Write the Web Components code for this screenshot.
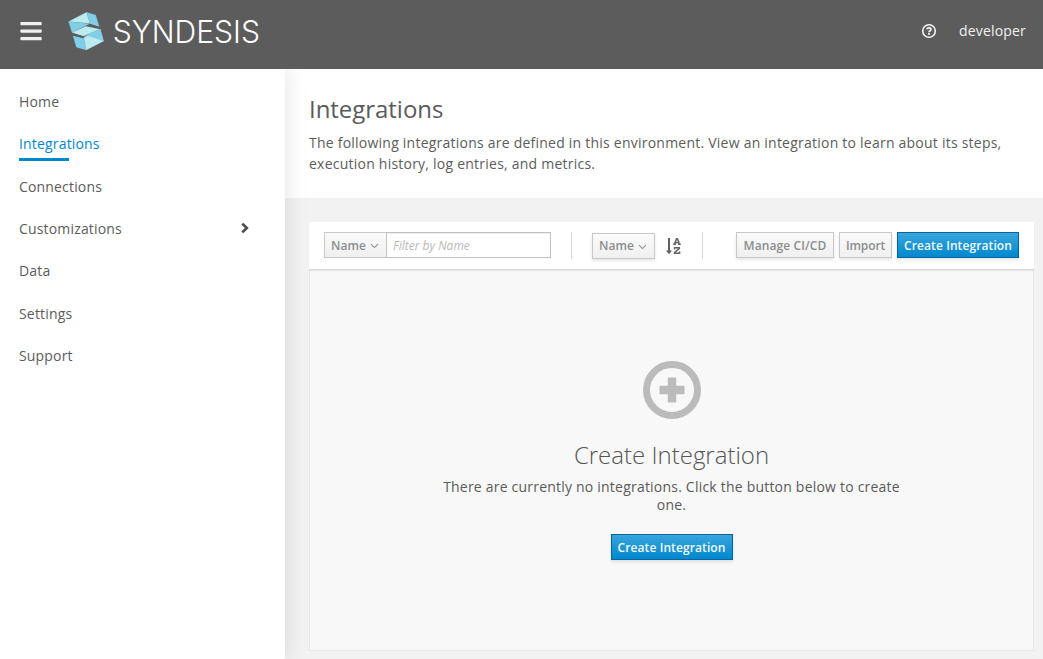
<!DOCTYPE html>
<html lang="en">
<head>
<meta charset="utf-8">
<title>Syndesis</title>
<style>
html,body{margin:0;height:100%;overflow:hidden}
body{font-family:"Open Sans",sans-serif;font-size:14px;color:#4d5258;background:#f2f2f2}
</style>
</head>
<body>
<syn-app></syn-app>
<script>
const define = (name, markup) => customElements.define(name, class extends HTMLElement {
  constructor() {
    super();
    const t = document.createElement('template');
    t.innerHTML = '<style>*{box-sizing:border-box}</style>' + markup;
    this.attachShadow({ mode: 'open' }).append(t.content.cloneNode(true));
  }
});

define('syn-logo', `
<style>:host{display:block;width:210px;height:62px}svg{display:block;overflow:visible}</style>
<svg width="210" height="62" viewBox="67 0 210 62" role="img">
  <g stroke="#8fb9c8" stroke-width=".2" stroke-linejoin="round">
    <path fill="#bcebf0" d="M68.5 21.6 86.5 12.2 90 23.6Z"/>
    <path fill="#7fcfe8" d="M86.5 12.2 95.7 14.9 99.3 26.8 90 23.8Z"/>
    <path fill="#7fcfe8" d="M68.5 21.6 89.6 23.8 72 32.4Z"/>
    <path fill="#bcebf0" d="M72 32.6 85.8 26.2 100.3 29.2 83.2 36.2Z"/>
    <path fill="#7fcfe8" d="M100.3 29.2 103.6 41 84.5 36Z"/>
    <path fill="#bcebf0" d="M83.6 36.8 103.6 41 86 50Z"/>
    <path fill="#bcebf0" d="M83.8 37.6 92 34 103.6 41 86 50Z"/>
    <path fill="#7fcfe8" d="M100.3 29.2 103.6 41 86.2 35Z"/>
    <path fill="#7fcfe8" d="M73 35.8 83.8 38.2 86 50 76.3 47.3Z"/>
  </g>
  <path d="M72.5 33.2 83.4 36.2 84.5 38.2 73 35.6ZM87.3 25.8 90.5 24.2 99.2 27.1 100 28.9Z" fill="#5c5c5c"/>
  <text x="112.7" y="42.6" textLength="147.3" lengthAdjust="spacingAndGlyphs" font-family="Inter,sans-serif" font-weight="300" font-size="31.5" fill="#fff">SYNDESIS</text>
</svg>`);

define('syn-header', `
<style>
:host{display:flex;align-items:flex-start;height:69px;background:#5c5c5c;color:#f1f1f1}
.menu{margin:21px 0 0 20px}
syn-logo{margin-left:25px}
.right{margin-left:auto;display:flex;align-items:center;height:60px;padding-right:17px;gap:23px;letter-spacing:.17px}
svg{display:block}
.help{margin-top:2px}
</style>
<svg class="menu" width="22" height="20" viewBox="0 0 22 20" fill="#f1f1f1"><rect x=".4" y=".9" width="21.3" height="3.3" rx=".9"/><rect x=".4" y="8.4" width="21.3" height="3.3" rx=".9"/><rect x=".4" y="15.9" width="21.3" height="3.3" rx=".9"/></svg>
<syn-logo></syn-logo>
<div class="right">
<svg class="help" width="14" height="14" viewBox="0 0 14 14" fill="none" stroke="#f5f5f5" overflow="visible"><circle cx="7" cy="7" r="6.3" stroke-width="1.6"/><path d="M4.8 5.3C5.1 4.2 5.9 3.9 7 3.9c1.2 0 2 .6 2 1.5C9 6.8 7 6.6 7 8.2" stroke-width="1.7"/><path d="M7 9v1.7" stroke-width="1.9"/></svg>
<slot></slot></div>`);

define('syn-nav-item', `
<style>
:host{display:flex;align-items:center;justify-content:space-between;height:42.35px;padding:0 36px 0 19px;line-height:22px;letter-spacing:.17px;color:#5c5c5c}
span{position:relative}
:host([active]){color:#0088ce}
:host([active]) span::after{content:"";position:absolute;left:0;bottom:-6px;width:50px;height:3px;background:#0088ce}
svg{display:none}
:host([expandable]) svg{display:block;margin-top:-2px}
</style>
<span><slot></slot></span>
<svg width="8" height="12" viewBox="0 0 8 12"><path d="M1.3 1.6 5.8 6 1.3 10.4" fill="none" stroke="#4d4d4d" stroke-width="2.7"/></svg>`);

define('syn-nav', `
<style>:host{display:block;padding-top:11.7px;background:#fff;box-shadow:0 0 22px 0 rgba(3,3,3,.12)}</style>
<slot></slot>`);

define('syn-button', `
<style>
:host{display:inline-flex;align-items:center;justify-content:center;height:26px;padding:1px 6px 0;border:1px solid #c8c8c8;background:linear-gradient(#fafafa,#f0f0f0);box-shadow:0 2px 3px rgba(3,3,3,.1);font-size:12px;font-weight:600;line-height:20px;letter-spacing:.1px;color:#8b8d8f;white-space:nowrap;box-sizing:border-box}
:host([primary]){color:#f5fafd;border-color:#00659c;background:linear-gradient(#39a5dc,#0088ce)}
svg{display:none}
:host([dropdown]) svg{display:block;margin:1px 1px 0 4px}
:host([flat]){box-shadow:none;border-right:0}
</style>
<slot></slot><svg width="9" height="6" viewBox="0 0 9 6"><path d="M1 1.1 4.5 4.6 8 1.1" fill="none" stroke="#8b8d8f" stroke-width="1.1"/></svg>`);

define('syn-toolbar', `
<style>
:host{display:flex;align-items:flex-start;height:48px;padding:10px 15px 0;background:#fff;border-bottom:1px solid #d8d8d8;box-shadow:0 1px 1px rgba(3,3,3,.06);position:relative}
.filter{display:flex}
.filter syn-button{width:62px}
input{width:165px;height:26px;border:1px solid #c2c2c2;border-radius:0;padding:0 6px;font:italic 12px "Open Sans",sans-serif;background:#fff;box-shadow:inset 0 1px 1px rgba(3,3,3,.075);outline:0}
input::placeholder{color:#b8b8b8;opacity:1}
.rule{width:1px;height:27px;background:#d8d8d8}
.r1{margin:0 20px}.r2{margin-left:21px}
.sort{width:63px;margin-top:1px;padding-top:0}
.az{margin:6px 0 0 11px;display:block}
.actions{display:flex;gap:5px;margin-left:auto}
.actions .m{width:98px}.actions .i{width:53px;letter-spacing:-.1px}.actions .c{width:122px}
</style>
<div class="filter"><syn-button dropdown flat>Name</syn-button><input placeholder="Filter by Name"></div>
<div class="rule r1"></div>
<syn-button class="sort" dropdown>Name</syn-button>
<svg class="az" width="15" height="17" viewBox="0 0 15 17"><path d="M3 0v14" stroke="#606060" stroke-width="2"/><path d="M0 12.6h6L3 16.2Z" fill="#606060"/><g fill="none" stroke="#666" stroke-width="1.5"><path d="M8.4 6.2 10.5.7h.9l2.1 5.5M9.2 4.4h3.5M7.2 6.3h2.8M12 6.3h2.8"/><path d="M8.5 11.6V9.8h4.8v.6l-4.8 4.3v.6h5.1v-1.9"/></g></svg>
<div class="rule r2"></div>
<div class="actions"><syn-button class="m">Manage CI/CD</syn-button><syn-button class="i">Import</syn-button><syn-button class="c" primary>Create Integration</syn-button></div>`);

define('syn-empty-state', `
<style>
:host{display:flex;flex-direction:column;align-items:center;height:381px;padding-top:91px;background:#f8f8f8;border:1px solid #e7e7e7;border-top:0;text-align:center;color:#5a5a5a;box-sizing:border-box}
svg{display:block}
h2{margin:20px 0 0;font-size:24px;font-weight:300;line-height:32px;color:#555}
p{margin:7px 0 20px;width:470px;line-height:18px;letter-spacing:.21px}
syn-button{width:122px}
</style>
<svg width="58" height="58" viewBox="0 0 58 58"><circle cx="29" cy="29" r="25.5" fill="none" stroke="#bbb" stroke-width="7"/><path d="M25.8 16.5h6.4q1 0 1 1v7.3h7.3q1 0 1 1v6.4q0 1-1 1h-7.3v7.3q0 1-1 1h-6.4q-1 0-1-1v-7.3h-7.3q-1 0-1-1v-6.4q0-1 1-1h7.3v-7.3q0-1 1-1Z" fill="#bbb"/></svg>
<h2><slot name="title"></slot></h2>
<p><slot></slot></p>
<syn-button primary>Create Integration</syn-button>`);

define('syn-page-heading', `
<style>
:host{display:block;height:129px;padding:23px 24px 0;background:#fff;box-sizing:border-box}
h1{margin:0 0 6px;font-size:24px;font-weight:400;line-height:34px;letter-spacing:-.04px;color:#5a5a5a}
p{margin:0;line-height:21px;letter-spacing:.23px;color:#5c5c5c}
</style>
<h1><slot name="title"></slot></h1><p><slot></slot></p>`);

define('syn-app', `
<style>
:host{display:grid;grid-template:69px 1fr/285px 1fr;height:100vh}
syn-header{grid-column:1/-1;z-index:3}
syn-nav{z-index:2}
main{min-width:0}
.card{margin:24px 9px 0 24px}
</style>
<syn-header>developer</syn-header>
<syn-nav>
<syn-nav-item>Home</syn-nav-item><syn-nav-item active>Integrations</syn-nav-item><syn-nav-item>Connections</syn-nav-item><syn-nav-item expandable>Customizations</syn-nav-item><syn-nav-item>Data</syn-nav-item><syn-nav-item>Settings</syn-nav-item><syn-nav-item>Support</syn-nav-item>
</syn-nav>
<main>
<syn-page-heading><span slot="title">Integrations</span>The following integrations are defined in this environment. View an integration to learn about its steps, execution history, log entries, and metrics.</syn-page-heading>
<div class="card"><syn-toolbar></syn-toolbar>
<syn-empty-state><span slot="title">Create Integration</span>There are currently no integrations. Click the button below to create one.</syn-empty-state></div>
</main>`);
</script>
</body>
</html>
